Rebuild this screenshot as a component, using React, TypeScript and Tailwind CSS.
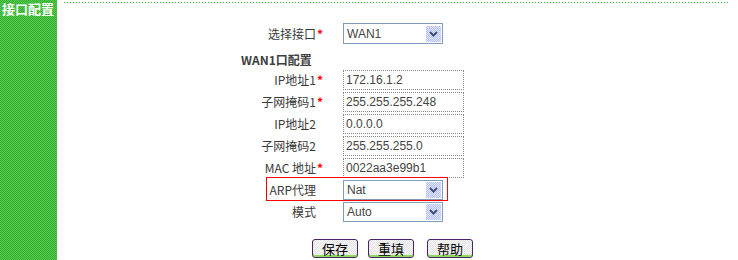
import type { ReactNode } from 'react';

function Arrow() {
  return (
    <div className="flex h-[16px] w-[15px] items-center justify-center bg-[repeating-conic-gradient(#b7c2f3_0_25%,#dfe5fc_0_50%)] bg-[length:2px_2px]">
      <svg width="9" height="6" viewBox="0 0 9 6">
        <polyline points="1,1 4.5,4.5 8,1" fill="none" stroke="#3f4f78" strokeWidth="2" />
      </svg>
    </div>
  );
}

function Select({ value, tall }: { value: string; tall?: boolean }) {
  return (
    <div
      className={
        'flex w-[100px] items-center justify-between border border-[#7f9db9] bg-white pl-[3px] pr-[1px] font-[Liberation_Sans,sans-serif] text-[12px] text-[#444] ' +
        (tall ? 'h-[21px]' : 'h-[20px]')
      }
    >
      <span>{value}</span>
      <Arrow />
    </div>
  );
}

function Input({ value }: { value: string }) {
  return (
    <div className="h-[20px] w-[121px] border border-dotted border-[#888] bg-white px-[2px] font-[Liberation_Sans,sans-serif] text-[12px] leading-[18px] text-[#444]">
      {value}
    </div>
  );
}

function Row({ label, req, children }: { label: string; req?: boolean; children: ReactNode }) {
  return (
    <div className="flex h-[20px] items-center">
      <div className="flex w-[92px] justify-end text-[12px] text-[#3a3a3a]">
        <span>{label}</span>
        <span className="w-[8px] text-center font-bold text-[#ff0000]">{req ? '*' : ''}</span>
      </div>
      <div className="ml-[19px]">{children}</div>
    </div>
  );
}

function Btn({ text, className }: { text: string; className?: string }) {
  return (
    <button
      className={
        'h-[19px] w-[46px] rounded-[3px] border border-[#4a2468] bg-[repeating-conic-gradient(#e2e2e2_0_25%,#fafafa_0_50%)] bg-[length:2px_2px] text-[13px] leading-[16px] text-black shadow-[inset_0_-2px_0_#8edc5c] ' +
        (className ?? '')
      }
    >
      {text}
    </button>
  );
}

export default function App() {
  return (
    <div className="flex h-[260px] w-[738px] bg-white font-['Noto_Sans_CJK_SC','Liberation_Sans',sans-serif]">
      <aside className="w-[57px] shrink-0 bg-[repeating-conic-gradient(#56ca4c_0_25%,#33b033_0_50%)] bg-[length:2px_2px]">
        <div className="pl-[2px] pt-[2px] text-[13px] font-bold leading-[14px] text-white">接口配置</div>
      </aside>
      <main className="flex-1">
        <div className="ml-[7px] mr-[8px] mt-[2px] h-px bg-[repeating-linear-gradient(to_right,#1fb31f_0_1px,transparent_1px_3px)]" />
        <div className="ml-[175px] mt-[20px] flex flex-col">
          <div className="flex h-[21px] items-center">
            <div className="flex w-[92px] justify-end text-[12px] text-[#3a3a3a]">
              <span>选择接口</span>
              <span className="w-[8px] text-center font-bold text-[#ff0000]">*</span>
            </div>
            <div className="ml-[19px]">
              <Select value="WAN1" tall />
            </div>
          </div>
          <div className="mt-[9px] h-[14px] pl-[9px] text-[12px] font-bold leading-[14px] text-[#404040]">WAN1口配置</div>
          <div className="mt-[3px] flex flex-col gap-[2px]">
            <Row label="IP地址1" req>
              <Input value="172.16.1.2" />
            </Row>
            <Row label="子网掩码1" req>
              <Input value="255.255.255.248" />
            </Row>
            <Row label="IP地址2">
              <Input value="0.0.0.0" />
            </Row>
            <Row label="子网掩码2">
              <Input value="255.255.255.0" />
            </Row>
            <Row label="MAC 地址" req>
              <Input value="0022aa3e99b1" />
            </Row>
            <div className="relative">
              <Row label="ARP代理">
                <Select value="Nat" />
              </Row>
              <div className="pointer-events-none absolute left-[34px] top-[-3px] h-[24px] w-[182px] border border-[#ff0000]" />
            </div>
            <Row label="模式">
              <Select value="Auto" />
            </Row>
          </div>
          <div className="ml-[80px] mt-[17px] flex">
            <Btn text="保存" />
            <Btn text="重填" className="ml-[10px]" />
            <Btn text="帮助" className="ml-[13px]" />
          </div>
        </div>
      </main>
    </div>
  );
}
